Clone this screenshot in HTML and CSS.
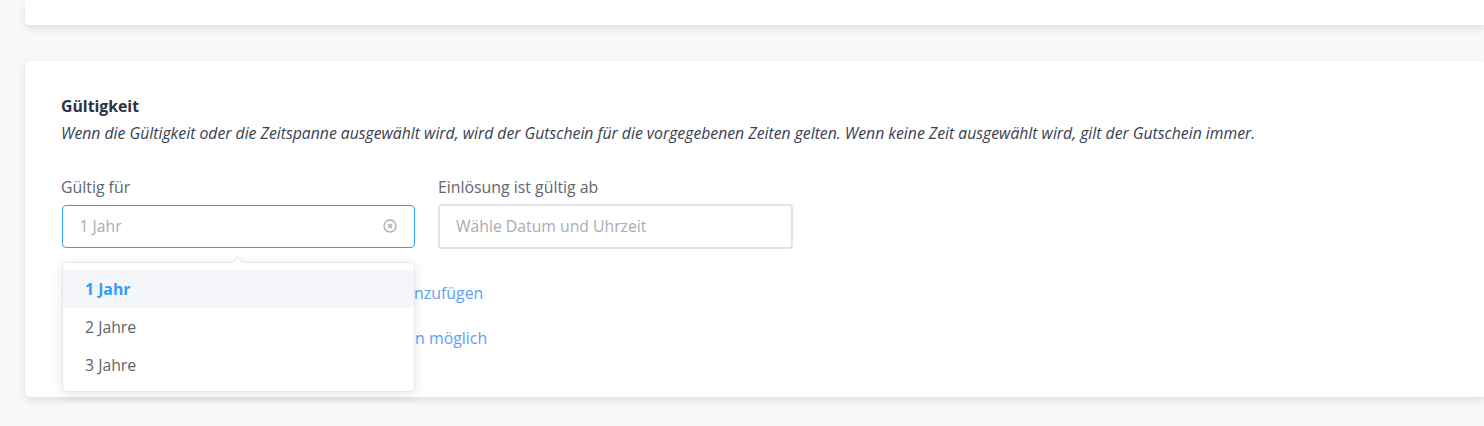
FILE: index.html
```html
<!DOCTYPE html>
<html lang="de">
<head>
<meta charset="UTF-8">
<meta name="viewport" content="width=device-width, initial-scale=1.0">
<title>Gültigkeit</title>
<link rel="stylesheet" href="styles.css">
</head>
<body>
<div class="card card-top"></div>

<div class="card card-main">
    <h2 class="title">Gültigkeit</h2>
    <p class="hint">Wenn die Gültigkeit oder die Zeitspanne ausgewählt wird, wird der Gutschein für die vorgegebenen Zeiten gelten. Wenn keine Zeit ausgewählt wird, gilt der Gutschein immer.</p>

    <div class="fields">
        <div class="field">
            <label class="label">Gültig für</label>
            <div class="input input-active">
                <span class="placeholder">1 Jahr</span>
                <svg class="clear" width="14" height="14" viewBox="0 0 14 14" fill="none" stroke="#a9acb3">
                    <circle cx="7" cy="7" r="6" stroke-width="1.3"/>
                    <path d="M5 5l4 4M9 5l-4 4" stroke-width="1.5"/>
                </svg>
            </div>

            <!-- Dropdown lies over the links below -->
            <div class="dropdown">
                <span class="arrow"></span>
                <div class="option option-selected">1 Jahr</div>
                <div class="option">2 Jahre</div>
                <div class="option">3 Jahre</div>
            </div>
        </div>
        <div class="field">
            <label class="label">Einlösung ist gültig ab</label>
            <div class="input">
                <span class="placeholder">Wähle Datum und Uhrzeit</span>
            </div>
        </div>
    </div>

    <a class="link link-first" href="#">Gültigkeit für weitere Wochentage und Zeiten hinzufügen</a>
    <a class="link" href="#">Einlösung nur an ausgewählten Tagen und Zeiten möglich</a>
</div>
</body>
</html>
```

FILE: styles.css
```css
* {
    box-sizing: border-box;
}

body {
    font-family: 'Open Sans', sans-serif;
    margin: 0;
    padding: 0 0 0 25px;
    height: 426px;
    overflow: hidden;
    background: #f9f9f9;
    color: #2b3242;
}

.card {
    background: #fff;
    border-radius: 5px 0 0 5px;
    box-shadow: 0 3px 8px rgba(0, 0, 0, 0.12);
}

.card-top {
    height: 25px;
    border-radius: 0 0 0 5px;
    margin-bottom: 36px;
}

.card-main {
    height: 336px;
    padding: 34px 36px 0;
}

.title {
    font-size: 15.8px;
    line-height: 22px;
    font-weight: 700;
    margin: 0;
}

.hint {
    font-size: 15.76px;
    line-height: 22px;
    font-style: italic;
    margin: 5px 0 0;
    color: #39404f;
    white-space: nowrap;
}

.fields {
    display: flex;
    gap: 22px;
    margin-top: 32px;
}

.field {
    position: relative;
    width: 355px;
}

.label {
    display: block;
    font-size: 15.85px;
    line-height: 22px;
    color: #606672;
    margin-bottom: 6px;
}

.input {
    display: flex;
    align-items: center;
    justify-content: space-between;
    height: 45px;
    padding: 0 16px 1px;
    border: 2px solid #e0e3e9;
    border-radius: 4px;
    background: #fff;
}

.input-active {
    height: 43px;
    margin: 7px 1px 1px;
    border: 1.5px solid #2f9fff;
    padding: 0 16.5px 1px;
}

.placeholder {
    font-size: 15.75px;
    color: #a9acb3;
}

.clear {
    margin-right: 1px;
}

.dropdown {
    position: absolute;
    top: 86px;
    left: 1px;
    width: 353px;
    height: 130px;
    padding-top: 7px;
    background: #fff;
    border: 1px solid #e6e8ec;
    border-radius: 4px;
    box-shadow: 0 2px 12px rgba(0, 0, 0, 0.1);
}

.arrow {
    position: absolute;
    top: -5px;
    left: 170px;
    width: 9px;
    height: 9px;
    background: #fff;
    border-top: 1px solid #e6e8ec;
    border-left: 1px solid #e6e8ec;
    transform: rotate(45deg);
}

.option {
    height: 38px;
    line-height: 38px;
    padding: 0 22px;
    font-size: 15.8px;
    color: #606266;
}

.option-selected {
    background: #f5f6fa;
    color: #2f9fff;
    font-weight: 700;
}

.link {
    display: block;
    font-size: 15.87px;
    line-height: 22px;
    color: #5c9dff;
    text-decoration: none;
    margin-top: 23px;
    white-space: nowrap;
}

.link-first {
    margin-top: 33px;
}
```
